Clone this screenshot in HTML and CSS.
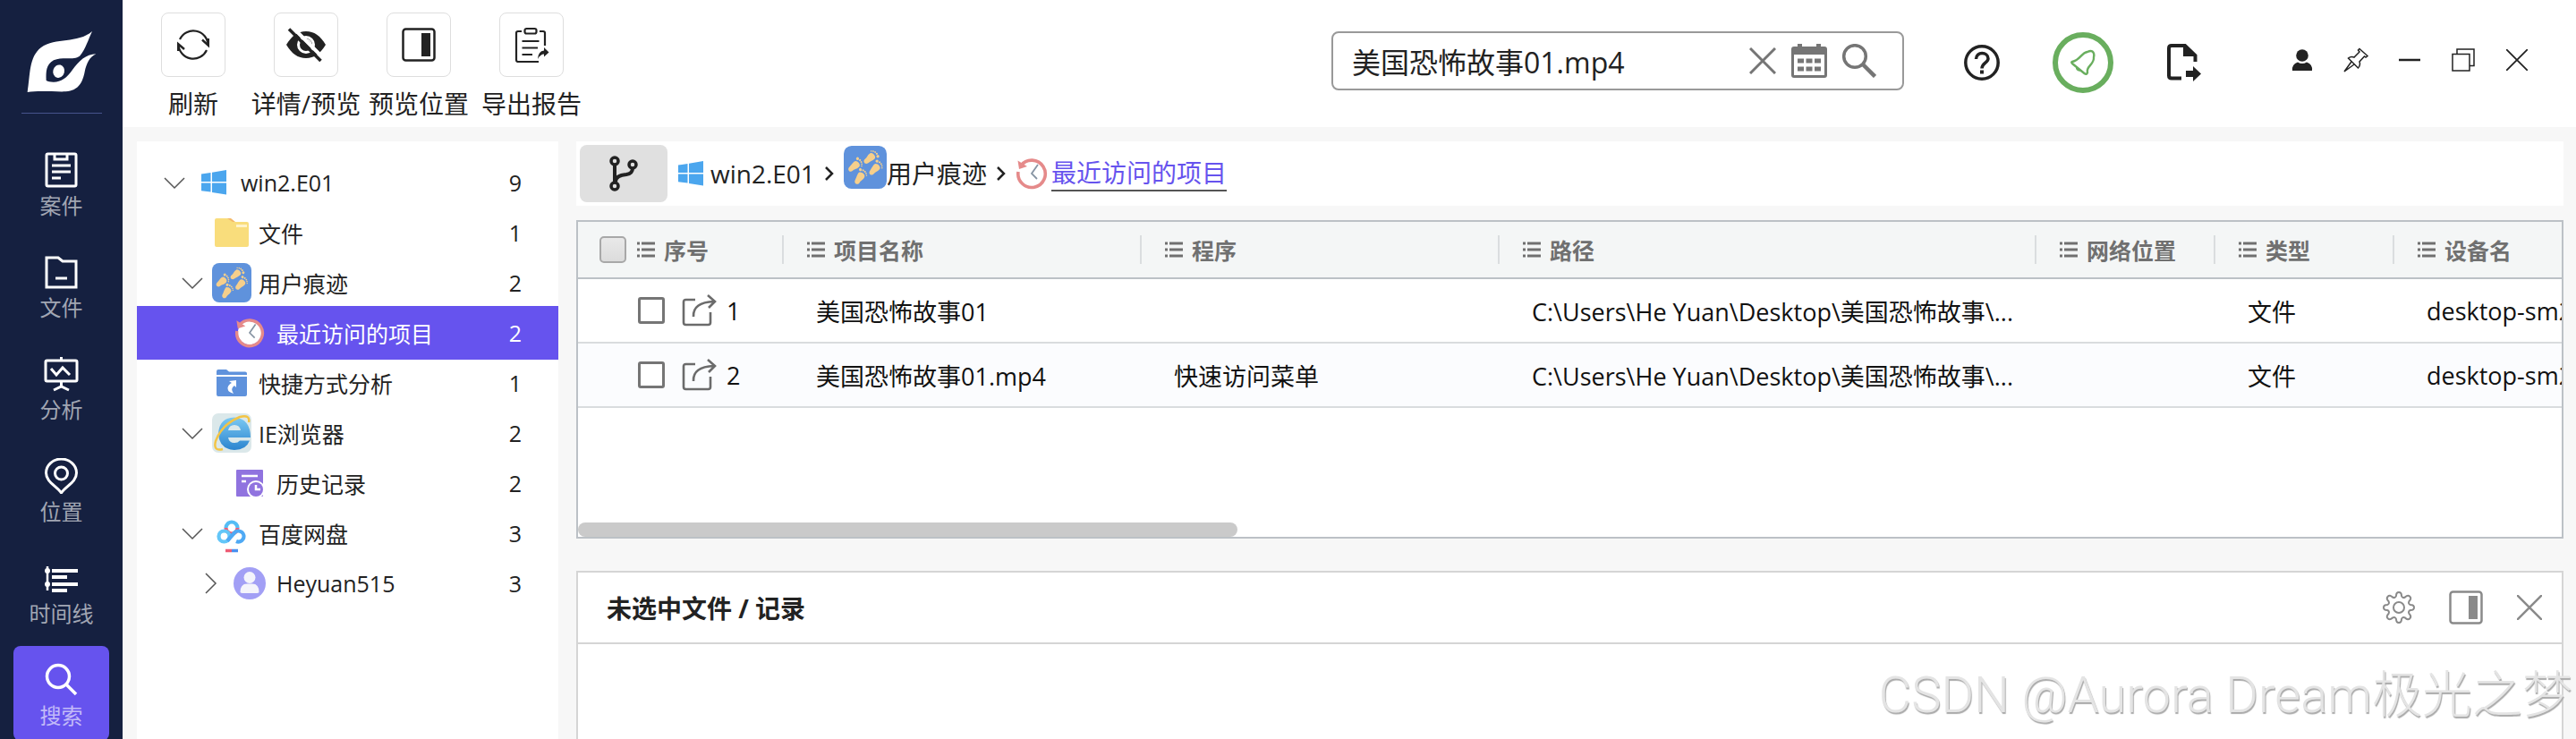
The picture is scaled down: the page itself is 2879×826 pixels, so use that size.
FILE: index.html
```html
<!DOCTYPE html>
<html lang="zh-CN">
<head>
  <meta charset="UTF-8">
  <meta name="viewport" content="width=device-width, initial-scale=1.0">
  <title>搜索 - 最近访问的项目</title>
  <link rel="stylesheet" href="styles.css">
</head>
<body>
  <!-- shared icons -->
  <svg class="defs" width="0" height="0">
    <symbol id="i-list" viewBox="0 0 20 18">
      <path d="M0 2h3M0 9h3M0 16h3M5 2h15M5 9h15M5 16h15" stroke="currentColor" stroke-width="2.8" fill="none"/>
    </symbol>
    <symbol id="i-share" viewBox="0 0 40 36">
      <path d="M15 6H4.500Q2 6 2 8.500V31.500Q2 34 4.500 34H29.500Q32 34 32 31.500V20M13 25Q12 9 36 8M29 1L37 8L30 15" stroke="#6b6b6b" stroke-width="2.600" fill="none"/>
    </symbol>
    <symbol id="i-down" viewBox="0 0 24 24">
      <path d="M1 7L12 18L23 7" stroke="#555" stroke-width="1.5" fill="none"/>
    </symbol>
    <symbol id="i-right" viewBox="0 0 24 24">
      <path d="M7 1L18 12L7 23" stroke="#555" stroke-width="1.5" fill="none"/>
    </symbol>
    <symbol id="i-win" viewBox="0 0 28 28">
      <path d="M0 4.500L10.500 3V13H0zM12 2.800L28 0V13H12zM0 14.500H10.500V24.600L0 23.200zM12 14.500H28V27.600L12 25z" fill="#4ba6ee"/>
    </symbol>
    <symbol id="i-foot" viewBox="-10 -10 20 20" overflow="visible">
      <path d="M-3.500 -3.500C-3.500 -7 3.800 -7 4 -3.500C4.200 0 2.500 1 2.500 4C2.500 7.800 -2.500 7.800 -2.700 4C-2.800 1 -3.500 0 -3.500 -3.500Z"/>
      <circle cx="-3.400" cy="-8" r="1.500"/><circle cx="-0.600" cy="-8.800" r="1"/><circle cx="1.700" cy="-8.500" r="0.900"/><circle cx="3.600" cy="-7.500" r="0.800"/><circle cx="5" cy="-6" r="0.700"/>
    </symbol>
    <symbol id="i-feet" viewBox="0 0 44 44">
      <rect width="44" height="44" rx="8" fill="#5f92dc"/>
      <g fill="#f6cf8b">
        <g transform="translate(26.500 13) rotate(52) scale(-1 1)"><use href="#i-foot" x="-10" y="-10" width="20" height="20"/></g>
        <g transform="translate(10.500 21) rotate(48)"><use href="#i-foot" x="-10" y="-10" width="20" height="20"/></g>
        <g transform="translate(31.500 24) rotate(40)"><use href="#i-foot" x="-10" y="-10" width="20" height="20"/></g>
        <g transform="translate(16 33) rotate(30)"><use href="#i-foot" x="-10" y="-10" width="20" height="20"/></g>
      </g>
    </symbol>
    <symbol id="i-clock" viewBox="0 0 36 36">
      <circle cx="18" cy="18" r="14" fill="#fff"/>
      <path d="M6 9A15.200 15.200 0 1 1 3 16" fill="none" stroke="#e58a8a" stroke-width="3.600"/>
      <path d="M2.500 3.500L4 13L13 10z" fill="#e58a8a"/>
      <path d="M25 8L18 18L24 24" fill="none" stroke="#8794a3" stroke-width="1.800"/>
    </symbol>
    <symbol id="i-layout" viewBox="0 0 38 38">
      <rect x="1.500" y="1.500" width="35" height="35" rx="3" fill="none" stroke="currentColor" stroke-width="2.500"/>
      <rect x="22" y="6" width="10" height="26" fill="currentColor"/>
    </symbol>
  </svg>

  <div class="app">
    <nav class="sidebar">
      <svg class="logo" width="78" height="70" viewBox="92 102 234 208">
        <path fill="#fff" d="M311 104C262 146 188 124 140 158C98 190 104 250 94 308C130 302 180 307 222 306C268 304 280 270 286 240C292 212 302 190 324 180C290 180 266 205 245 233C225 262 205 275 180 274C170 274 163 272 157 269C156 240 156 215 182 201C210 188 248 202 269 187C289 165 298 130 311 104Z"/>
        <ellipse cx="199" cy="238" rx="19" ry="22" transform="rotate(15 199 238)" fill="#fff"/>
      </svg>
      <hr class="sidebar-line">
      <a class="nav-item" href="#">
        <svg width="40" height="40" viewBox="0 0 40 40" fill="none" stroke="#fff" stroke-width="3"><rect x="3" y="2" width="33" height="36" rx="1.500"/><path d="M12 2V8H26V2M9 15H30M9 22H30M9 29H19"/></svg>
        <span>案件</span>
      </a>
      <a class="nav-item" href="#">
        <svg width="40" height="40" viewBox="0 0 40 40" fill="none" stroke="#fff" stroke-width="3"><path d="M3 4H16L21 8H36V37H3zM13 27H26"/></svg>
        <span>文件</span>
      </a>
      <a class="nav-item" href="#">
        <svg width="40" height="40" viewBox="0 0 40 40" fill="none" stroke="#fff" stroke-width="3"><rect x="2" y="5" width="35" height="23" rx="1.500"/><path d="M19.500 1V5M8 14L14 21L21 13L29 21M19.500 28V35M11 38L19.500 34L28 38"/></svg>
        <span>分析</span>
      </a>
      <a class="nav-item" href="#">
        <svg width="40" height="40" viewBox="0 0 40 40" fill="none" stroke="#fff" stroke-width="3"><path d="M19.500 39C14 31 2.500 27 2.500 16.500C2.500 8 10 1 19.500 1C29 1 36.500 8 36.500 16.500C36.500 27 25 31 19.500 39Z"/><circle cx="19.500" cy="17" r="7"/></svg>
        <span>位置</span>
      </a>
      <a class="nav-item" href="#">
        <svg width="40" height="40" viewBox="0 0 40 40" fill="none" stroke="#fff" stroke-width="4"><path d="M4 7V34" stroke-width="2.500"/><circle cx="4" cy="12" r="1.500" stroke-width="3"/><circle cx="4" cy="27" r="1.500" stroke-width="3"/><path d="M9 12H38M9 19H26M9 27H38M9 34H26"/></svg>
        <span>时间线</span>
      </a>
      <a class="nav-item active" href="#">
        <svg width="40" height="40" viewBox="0 0 40 40" fill="none" stroke="#fff" stroke-width="3.500"><circle cx="16" cy="16" r="12.500"/><path d="M25 25L36 36"/></svg>
        <span>搜索</span>
      </a>
    </nav>

    <div class="page">
      <header class="topbar">
        <div class="tools">
          <button class="tool">
            <span class="tool-box"><svg width="36" height="36" viewBox="0 0 36 36" fill="none" stroke="#222" stroke-width="2.200"><path d="M3 12A16.500 16.500 0 0 1 34.500 18.500M33 24A16.500 16.500 0 0 1 1.500 18"/><path d="M28 12.500L35 19V11M8 23L1 17V25" stroke-width="2.400"/></svg></span>
            <span>刷新</span>
          </button>
          <button class="tool">
            <span class="tool-box"><svg width="44" height="40" viewBox="0 0 44 40"><path d="M0 20C6 10 13 5 22 5S38 10 44 20C38 30 31 35 22 35S6 30 0 20Z" fill="#222"/><circle cx="22" cy="20" r="8.500" fill="none" stroke="#fff" stroke-width="3"/><path d="M22 14A6 6 0 0 1 28 20" fill="none" stroke="#fff" stroke-width="1.500"/><path d="M6.500 0L42.500 36" stroke="#fff" stroke-width="4"/><path d="M3 2.500L38.500 38" stroke="#222" stroke-width="3.500"/></svg></span>
            <span>详情/预览</span>
          </button>
          <button class="tool">
            <span class="tool-box"><svg width="38" height="38"><use href="#i-layout"/></svg></span>
            <span>预览位置</span>
          </button>
          <button class="tool">
            <span class="tool-box"><svg width="40" height="40" viewBox="0 0 40 40" fill="none" stroke="#222" stroke-width="2.200"><rect x="12.500" y="2" width="13" height="5.500" rx="2"/><path d="M9 5H5Q3 5 3 7V37Q3 39 5 39H28M29 5H33Q35 5 35 7V21M9.500 16H28.500M9.500 23.500H27M9.500 31H21"/><path d="M27 36Q27.500 27 34 26.500V23L39.500 28.500L34 33.500V30.500Q30 30.500 27 36Z" fill="#222" stroke="none"/></svg></span>
            <span>导出报告</span>
          </button>
        </div>

        <div class="search">
          <input type="text" aria-label="搜索" value="美国恐怖故事01.mp4">
          <button aria-label="清除"><svg width="30" height="30" viewBox="0 0 30 30"><path d="M1 1L29 29M29 1L1 29" stroke="#757575" stroke-width="3"/></svg></button>
          <button aria-label="日期"><svg width="40" height="38" viewBox="0 0 40 38"><path d="M3 3H7V0H12V3H28V0H33V3H37Q40 3 40 6V35Q40 38 37 38H3Q0 38 0 35V6Q0 3 3 3Z" fill="#757575"/><path d="M3 12H37V35H3Z" fill="#fff"/><path d="M7 19H33M7 28H33" stroke="#757575" stroke-width="5" stroke-dasharray="7 2.500"/></svg></button>
          <button aria-label="搜索"><svg width="38" height="38" viewBox="0 0 38 38" fill="none" stroke="#757575" stroke-width="3.500"><circle cx="14" cy="14" r="12.300"/><path d="M23 23L36.500 36.500" stroke-width="4.500"/></svg></button>
        </div>

        <div class="actions">
          <button aria-label="帮助"><svg width="40" height="40" viewBox="0 0 40 40" fill="none" stroke="#222"><circle cx="20" cy="20" r="18.200" stroke-width="3.500"/><path d="M13.500 16C13.500 7 27 8 27 15.500C27 20 20 20.500 20 26.500" stroke-width="3.500"/><path d="M20 28.500V32.500" stroke-width="4"/></svg></button>
          <button aria-label="通知"><svg width="68" height="68" viewBox="0 0 68 68" fill="none" stroke="#69ae5e"><circle cx="34" cy="34" r="31" stroke-width="6"/><path d="M22 33C31 31 32 23 39 22C41 21 43 20.500 44.500 21.500C46.500 23 46.500 26 46 28C47 36 37 38 39 45Q38 48 35.500 46L22 35Q20.500 33.500 22 33Z" stroke-width="2.400"/><path d="M26 38L33 43Q28 45 26 41Z" fill="#69ae5e" stroke="none"/></svg></button>
          <button aria-label="导出"><svg width="40" height="42" viewBox="0 0 40 42"><path d="M17 38.500H6Q3 38.500 3 35.500V5Q3 2 6 2H21L32.500 13V20" fill="none" stroke="#222" stroke-width="4"/><path d="M19 1H22L34 13V14H19ZM22 30H30V25L39 33.500L30 42V37H22Z" fill="#222"/></svg></button>
        </div>

        <div class="window-buttons">
          <button aria-label="用户"><svg width="24" height="24" viewBox="0 0 24 24" fill="#222"><circle cx="12" cy="7" r="6.800"/><path d="M1 24Q0 17 7 14.500Q12 17.500 17 14.500Q24 17 23 24Z"/></svg></button>
          <button aria-label="置顶"><svg width="28" height="28" viewBox="0 0 28 28" fill="none" stroke="#222" stroke-width="1.500"><path d="M18 1.500L27 9.500L25 11L23.500 10L18 16Q19.500 20 16.500 23L5.500 12Q8.500 9.500 12 11L18 5L16.500 3Z"/><path d="M9 16L1 27L12 19"/></svg></button>
          <button aria-label="最小化"><svg width="24" height="24" viewBox="0 0 24 24"><path d="M0 12H24" stroke="#222" stroke-width="2.500"/></svg></button>
          <button aria-label="还原"><svg width="26" height="26" viewBox="0 0 26 26" fill="none" stroke="#222" stroke-width="1.500"><path d="M1 6.500H20V25H1ZM6 6V1H25V19.500H20"/></svg></button>
          <button aria-label="关闭"><svg width="24" height="24" viewBox="0 0 24 24"><path d="M0 0L24 24M24 0L0 24" stroke="#222" stroke-width="1.800"/></svg></button>
        </div>
      </header>

      <div class="content">
        <aside class="tree">
          <div class="node level0">
            <svg class="arrow"><use href="#i-down"/></svg>
            <span class="node-icon"><svg width="28" height="28"><use href="#i-win"/></svg></span>
            <span class="node-name">win2.E01</span><span class="count">9</span>
          </div>
          <div class="node level1">
            <span class="arrow"></span>
            <span class="node-icon"><svg width="38" height="32" viewBox="0 0 38 32"><path d="M0 2Q0 0 2 0H16L22 4H36Q38 4 38 6V30Q38 32 36 32H2Q0 32 0 30Z" fill="#f9dd7c"/><path d="M14 0H18L23 4H20Z" fill="#f4b96a"/><path d="M24 8.500H36" stroke="#fff3c9" stroke-width="3"/></svg></span>
            <span class="node-name">文件</span><span class="count">1</span>
          </div>
          <div class="node level1">
            <svg class="arrow"><use href="#i-down"/></svg>
            <span class="node-icon"><svg width="44" height="44"><use href="#i-feet"/></svg></span>
            <span class="node-name">用户痕迹</span><span class="count">2</span>
          </div>
          <div class="node level2 selected">
            <span class="arrow"></span>
            <span class="node-icon"><svg width="34" height="34"><use href="#i-clock"/></svg></span>
            <span class="node-name">最近访问的项目</span><span class="count">2</span>
          </div>
          <div class="node level1">
            <span class="arrow"></span>
            <span class="node-icon"><svg width="34" height="30" viewBox="0 0 34 30"><path d="M0 6V2Q0 0 2 0H11L14 2.500H32Q34 2.500 34 4.500V6ZM0 8H34V28Q34 30 32 30H2Q0 30 0 28Z" fill="#5f92dc"/><path d="M14 13L22 12V20L20 18Q15 21 19 27Q12 25 12.500 20.500Q13 17 17 15Z" fill="#fff"/></svg></span>
            <span class="node-name">快捷方式分析</span><span class="count">1</span>
          </div>
          <div class="node level1">
            <svg class="arrow"><use href="#i-down"/></svg>
            <span class="node-icon"><svg width="44" height="44" viewBox="0 0 44 44"><defs><linearGradient id="ie" x1="0" y1="0" x2="0" y2="1"><stop offset="0" stop-color="#7cc9f2"/><stop offset="1" stop-color="#2a84cf"/></linearGradient></defs><rect width="44" height="44" rx="7" fill="#dbe8ea"/><path d="M43 27H18Q19 33 25 33Q29 33 31 30.500H42Q38 41 25 41Q8 40 7 23Q8 5 25 4.500Q43 6 43 27ZM18 19H32Q31 13 25 13Q19 13 18 19Z" fill="url(#ie)" fill-rule="evenodd"/><path d="M41 10Q43 1 31 4Q11 12 4 31Q1 43 12 40" fill="none" stroke="#f3c445" stroke-width="2.500"/></svg></span>
            <span class="node-name">IE浏览器</span><span class="count">2</span>
          </div>
          <div class="node level2">
            <span class="arrow"></span>
            <span class="node-icon"><svg width="32" height="32" viewBox="0 0 32 32"><rect x="1" y="1" width="30" height="30" rx="1" fill="#9073df"/><path d="M7 8H25M7 14H12" stroke="#fff" stroke-width="2.500"/><circle cx="23" cy="23" r="10" fill="#fff"/><circle cx="23" cy="23" r="8" fill="#9073df"/><path d="M23 18V23H28" fill="none" stroke="#fff" stroke-width="2.500"/></svg></span>
            <span class="node-name">历史记录</span><span class="count">2</span>
          </div>
          <div class="node level1">
            <svg class="arrow"><use href="#i-down"/></svg>
            <span class="node-icon"><svg width="44" height="44" viewBox="0 0 44 44" fill="none" stroke-width="4.200"><path d="M28.500 16A6.500 6.500 0 0 0 15.500 16" stroke="#55bdf5"/><path d="M15.500 16A6.500 6.500 0 0 0 28.500 16" stroke="#ee5c74"/><circle cx="13.500" cy="25.500" r="6" stroke="#63c6f8"/><path d="M17 30.500L25 21.500A6 6 0 1 1 27 31" stroke="#4fa9f4"/><path d="M15 41.500H22" stroke="#ee5c74" stroke-width="3.500"/><path d="M22 41.500H29" stroke="#4a90f0" stroke-width="3.500"/></svg></span>
            <span class="node-name">百度网盘</span><span class="count">3</span>
          </div>
          <div class="node level2">
            <svg class="arrow"><use href="#i-right"/></svg>
            <span class="node-icon"><svg width="36" height="36" viewBox="0 0 36 36"><circle cx="18" cy="18" r="18" fill="#a29ff5"/><circle cx="18" cy="11.500" r="6.500" fill="#f4f4fb"/><path d="M7.500 28Q7.500 18.500 15 18.500H21Q28.500 18.500 28.500 28Q28 29 26 29H10Q8 29 7.500 28Z" fill="#f4f4fb"/></svg></span>
            <span class="node-name">Heyuan515</span><span class="count">3</span>
          </div>
        </aside>

        <main class="main">
          <div class="crumbs">
            <button class="branch" aria-label="路径"><svg width="36" height="40" viewBox="0 0 36 40" fill="none" stroke="#222" stroke-width="3.500"><circle cx="8" cy="6" r="4"/><circle cx="8" cy="34" r="4"/><circle cx="28" cy="10" r="4"/><path d="M8 10V30M28 14Q28 20 21 21Q9 22 9 29" stroke-width="4"/></svg></button>
            <a class="crumb" href="#"><svg width="28" height="28"><use href="#i-win"/></svg><span>win2.E01</span></a>
            <svg class="crumb-sep" width="12" height="16" viewBox="0 0 12 16"><path d="M2 1L9 8L2 15" fill="none" stroke="#222" stroke-width="2.500"/></svg>
            <a class="crumb tight" href="#"><svg class="raised" width="48" height="48"><use href="#i-feet"/></svg><span>用户痕迹</span></a>
            <svg class="crumb-sep" width="12" height="16" viewBox="0 0 12 16"><path d="M2 1L9 8L2 15" fill="none" stroke="#222" stroke-width="2.500"/></svg>
            <a class="crumb current" href="#"><svg width="36" height="36"><use href="#i-clock"/></svg><span>最近访问的项目</span></a>
          </div>

          <div class="grid">
            <table>
              <colgroup>
                <col class="w-no"><col class="w-name"><col class="w-name"><col class="w-path"><col class="w-small"><col class="w-small"><col>
              </colgroup>
              <thead>
                <tr>
                  <th><div class="head"><input type="checkbox" class="check-all" aria-label="全选"><svg width="20" height="18"><use href="#i-list"/></svg>序号</div></th>
                  <th><div class="head"><svg width="20" height="18"><use href="#i-list"/></svg>项目名称</div></th>
                  <th><div class="head"><svg width="20" height="18"><use href="#i-list"/></svg>程序</div></th>
                  <th><div class="head"><svg width="20" height="18"><use href="#i-list"/></svg>路径</div></th>
                  <th><div class="head"><svg width="20" height="18"><use href="#i-list"/></svg>网络位置</div></th>
                  <th><div class="head"><svg width="20" height="18"><use href="#i-list"/></svg>类型</div></th>
                  <th><div class="head"><svg width="20" height="18"><use href="#i-list"/></svg>设备名</div></th>
                </tr>
              </thead>
              <tbody>
                <tr>
                  <td><div class="row-no"><input type="checkbox" aria-label="选择 1"><svg width="40" height="36"><use href="#i-share"/></svg>1</div></td>
                  <td>美国恐怖故事01</td>
                  <td></td>
                  <td>C:\Users\He Yuan\Desktop\美国恐怖故事\...</td>
                  <td></td>
                  <td>文件</td>
                  <td>desktop-sm2</td>
                </tr>
                <tr>
                  <td><div class="row-no"><input type="checkbox" aria-label="选择 2"><svg width="40" height="36"><use href="#i-share"/></svg>2</div></td>
                  <td>美国恐怖故事01.mp4</td>
                  <td>快速访问菜单</td>
                  <td>C:\Users\He Yuan\Desktop\美国恐怖故事\...</td>
                  <td></td>
                  <td>文件</td>
                  <td>desktop-sm2</td>
                </tr>
              </tbody>
            </table>
            <div class="scroll-thumb"></div>
          </div>

          <section class="preview">
            <div class="preview-head">
              <h2>未选中文件 / 记录</h2>
              <div class="preview-buttons">
                <button aria-label="设置"><svg width="36" height="36" viewBox="0 0 36 36" fill="none" stroke="#8a8a8a" stroke-width="2"><circle cx="18" cy="18" r="6"/><path d="M15 5Q15 1 18 1T21 5Q22 8 25 6.500Q28 3.500 30.300 5.700T29.500 11Q28 14 31 15Q35 15 35 18T31 21Q28 22 29.500 25Q32.500 28 30.300 30.300T25 29.500Q22 28 21 31Q21 35 18 35T15 31Q14 28 11 29.500Q8 32.500 5.700 30.300T6.500 25Q8 22 5 21Q1 21 1 18T5 15Q8 14 6.500 11Q3.500 8 5.700 5.700T11 6.500Q14 8 15 5Z"/></svg></button>
                <button aria-label="布局"><svg width="38" height="38"><use href="#i-layout"/></svg></button>
                <button aria-label="关闭"><svg width="28" height="28" viewBox="0 0 28 28"><path d="M0 0L28 28M28 0L0 28" stroke="#8a8a8a" stroke-width="2.500"/></svg></button>
              </div>
            </div>
          </section>
        </main>
      </div>
    </div>
  </div>
  <div class="watermark">CSDN @Aurora Dream极光之梦</div>
</body>
</html>
```
FILE: styles.css
```css
* {
  margin: 0;
  padding: 0;
  box-sizing: border-box;
}

body {
  font-family: "Open Sans", "Noto Sans CJK SC", sans-serif;
  font-size: 28px;
  color: #222;
  background-color: #f7f7f7;
  overflow: hidden;
}

button {
  font: inherit;
  color: inherit;
  background: none;
  border: none;
  cursor: pointer;
}

a {
  color: inherit;
  text-decoration: none;
}

svg {
  display: block;
  flex-shrink: 0;
}

.defs {
  position: absolute;
}

.app {
  display: flex;
  height: 100vh;
}

/* left navigation */
.sidebar {
  width: 137px;
  flex-shrink: 0;
  background-color: #152040;
  display: flex;
  flex-direction: column;
  align-items: center;
  padding-top: 34px;
}

.sidebar-line {
  width: 90px;
  height: 1px;
  flex-shrink: 0;
  border: none;
  background-color: #46538c;
  margin: 22px 0 25px;
}

.nav-item {
  width: 107px;
  height: 106px;
  flex-shrink: 0;
  margin-bottom: 8px;
  padding-top: 18px;
  border-radius: 8px;
  display: flex;
  flex-direction: column;
  align-items: center;
  gap: 6px;
  font-size: 24px;
  line-height: 28px;
  color: #a1a6b3;
}

.nav-item.active {
  background-color: #6653ee;
  color: #c2baf8;
}

.page {
  flex: 1;
  min-width: 0;
  display: flex;
  flex-direction: column;
}

/* top bar */
.topbar {
  height: 142px;
  flex-shrink: 0;
  background-color: #fff;
  display: flex;
  padding: 14px 36px 0 16px;
}

.tools {
  display: flex;
  margin-right: auto;
}

.tool {
  width: 126px;
  display: flex;
  flex-direction: column;
  align-items: center;
  gap: 12px;
  line-height: 36px;
  white-space: nowrap;
}

.tool-box {
  width: 72px;
  height: 72px;
  border: 1px solid #dedede;
  border-radius: 8px;
  display: flex;
  align-items: center;
  justify-content: center;
}

.search {
  width: 640px;
  height: 66px;
  margin: 21px 30px 0 0;
  padding: 0 29px 0 21px;
  border: 2px solid #999;
  border-radius: 8px;
  display: flex;
  align-items: center;
  gap: 17px;
}

.search input {
  flex: 1;
  min-width: 0;
  border: none;
  outline: none;
  font: inherit;
  font-size: 32px;
  color: #222;
}

.actions,
.window-buttons {
  display: flex;
  align-items: center;
  height: 112px;
}

.actions button {
  width: 113px;
  display: flex;
  justify-content: center;
}

.window-buttons {
  height: 106px;
  margin-left: 46px;
}

.window-buttons button {
  width: 60px;
  display: flex;
  justify-content: center;
}

.content {
  flex: 1;
  min-height: 0;
  display: flex;
  gap: 20px;
  padding: 16px 14px 0 16px;
}

/* evidence tree */
.tree {
  width: 471px;
  flex-shrink: 0;
  background-color: #fff;
  padding-top: 18px;
  font-size: 25px;
}

.node {
  height: 56px;
  display: flex;
  align-items: center;
  padding-right: 41px;
}

.level0 {
  padding-left: 30px;
}

.level1 {
  padding-left: 50px;
}

.level2 {
  padding-left: 70px;
}

.node.selected {
  height: 60px;
  margin: -2px 0;
  background-color: #6653ee;
  color: #fff;
}

.arrow {
  width: 24px;
  height: 24px;
  margin-right: 10px;
}

.node-icon {
  width: 44px;
  display: flex;
  justify-content: center;
  margin-right: 8px;
}

.count {
  margin-left: auto;
}

.main {
  flex: 1;
  min-width: 0;
  display: flex;
  flex-direction: column;
}

/* breadcrumb */
.crumbs {
  height: 72px;
  flex-shrink: 0;
  background-color: #fff;
  display: flex;
  align-items: center;
  padding-left: 4px;
}

.branch {
  width: 98px;
  height: 64px;
  margin-right: 12px;
  border-radius: 8px;
  background-color: #e0e0e0;
  display: flex;
  align-items: center;
  justify-content: center;
}

.crumb {
  display: flex;
  align-items: center;
  gap: 8px;
}

.crumb.tight {
  gap: 0;
}

.raised {
  margin-bottom: 14px;
}

.crumb-sep {
  margin: 0 10px;
}

.crumb.current {
  gap: 4px;
  color: #6653ee;
}

.crumb.current span {
  border-bottom: 2px solid #555;
}

.crumb span {
  line-height: 38px;
}

/* result grid */
.grid {
  height: 356px;
  flex-shrink: 0;
  margin: 16px 0 36px;
  border: 2px solid #bcc1c6;
  background-color: #fff;
  overflow: hidden;
  display: flex;
  flex-direction: column;
}

table {
  width: 100%;
  table-layout: fixed;
  border-collapse: separate;
  border-spacing: 0;
}

.w-no {
  width: 230px;
}

.w-name {
  width: 400px;
}

.w-path {
  width: 600px;
}

.w-small {
  width: 200px;
}

th {
  height: 64px;
  padding-left: 26px;
  background-color: #f4f6f6;
  border-bottom: 2px solid #bcc1c6;
  text-align: left;
  font-size: 25px;
  color: #707070;
}

th:first-child {
  padding-left: 24px;
}

.head {
  height: 32px;
  border-right: 2px solid #dadddf;
  display: flex;
  align-items: center;
  gap: 10px;
  white-space: nowrap;
}

th:last-child .head {
  border-right: none;
}

td {
  height: 72px;
  padding-left: 36px;
  border-bottom: 2px solid #d9dcde;
  font-size: 27px;
  color: #111;
  white-space: nowrap;
  overflow: hidden;
}

td:first-child {
  padding-left: 67px;
}

tbody tr:nth-child(even) {
  background-color: #fbfcfe;
}

input[type="checkbox"] {
  appearance: none;
  width: 30px;
  height: 30px;
  border: 3px solid #757575;
  border-radius: 3px;
  background-color: #fff;
}

.check-all[type="checkbox"] {
  margin-right: 2px;
  border: 2px solid #a8a8a8;
  border-radius: 5px;
  background: linear-gradient(#e9e9e9, #dcdcdc);
}

.row-no {
  display: flex;
  align-items: center;
}

.row-no svg {
  margin: 0 10px 0 19px;
}

.scroll-thumb {
  width: 33.25%;
  height: 16px;
  flex-shrink: 0;
  margin-top: auto;
  border-radius: 8px;
  background-color: #cacaca;
}

/* preview panel */
.preview {
  flex: 1;
  background-color: #fff;
  border: 2px solid #d5d5d5;
  border-bottom: none;
}

.preview-head {
  height: 80px;
  border-bottom: 2px solid #d5d5d5;
  display: flex;
  align-items: center;
  justify-content: space-between;
  padding: 0 22px 0 32px;
}

.preview-head h2 {
  font-size: 28px;
  font-weight: bold;
}

.preview-buttons {
  display: flex;
  align-items: center;
  gap: 38px;
  color: #8a8a8a;
}

.watermark {
  position: absolute;
  right: 4px;
  bottom: 13px;
  font-family: Roboto, "Noto Sans CJK SC", sans-serif;
  font-size: 56px;
  font-weight: 300;
  line-height: 72px;
  color: #e4e4e4;
  text-shadow: 1px 2px 1px #aaa;
  white-space: nowrap;
}
```
